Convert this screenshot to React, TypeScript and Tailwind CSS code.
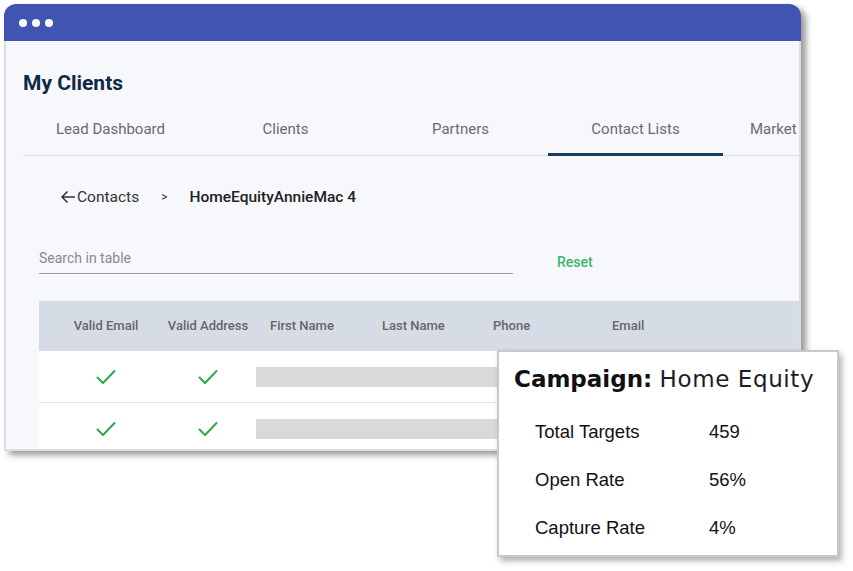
import React from "react";

const tabs = ["Lead Dashboard", "Clients", "Partners", "Contact Lists"];

const stats = [
  { label: "Total Targets", value: "459" },
  { label: "Open Rate", value: "56%" },
  { label: "Capture Rate", value: "4%" },
];

const Check = () => (
  <svg width="20" height="16" viewBox="0 0 20 16" fill="none" aria-hidden="true">
    <path d="M1.5 8.5 L7 14 L18.5 2" stroke="#2ea84a" strokeWidth="2" strokeLinecap="round" strokeLinejoin="round" />
  </svg>
);

const Row = ({ last }: { last?: boolean }) => (
  <div className={`flex h-[52px] items-center bg-white ${last ? "" : "border-b border-[#e3e3e3]"}`}>
    <div className="flex w-[134px] justify-center">
      <Check />
    </div>
    <div className="flex w-[70px] justify-center">
      <Check />
    </div>
    <div className="ml-[13px] h-[20px] w-[320px] bg-[#d9d9d9]" />
  </div>
);

export default function App() {
  return (
    <div className="relative h-[571px] w-[853px] overflow-hidden bg-white font-['Roboto',sans-serif]">
      {/* Browser window */}
      <div className="ml-[4px] mt-[4px] flex h-[447px] w-[797px] flex-col overflow-hidden rounded-t-[12px] shadow-[5px_4px_6px_rgba(0,0,0,0.4)]">
        <div className="flex h-[37px] shrink-0 items-center gap-[5px] bg-[#4054b2] pl-[15px]">
          <span className="h-[8px] w-[8px] rounded-full bg-white" />
          <span className="h-[8px] w-[8px] rounded-full bg-white" />
          <span className="h-[8px] w-[8px] rounded-full bg-white" />
        </div>

        <div className="flex-1 overflow-hidden border-x-2 border-b-2 border-[#dedede] bg-[#f7f8fc] pl-[17px]">
          <h1 className="mt-[29px] text-[21px] font-bold leading-[26px] text-[#0e2b46]">My Clients</h1>

          {/* Tabs */}
          <div className="mt-[15px] flex h-[45px] border-b border-[#dcdcdc] pb-[8px]">
            {tabs.map((t) => (
              <div
                key={t}
                className={`flex w-[175px] shrink-0 items-center justify-center whitespace-nowrap text-[15px] text-[#6b6b6b] ${
                  t === "Contact Lists" ? "-mb-[9px] border-b-[3px] border-[#1b3a5e] pb-[5px]" : ""
                }`}
              >
                {t}
              </div>
            ))}
            <div className="flex shrink-0 items-center whitespace-nowrap pl-[27px] text-[15px] text-[#6b6b6b]">
              Market
            </div>
          </div>

          {/* Breadcrumb */}
          <div className="ml-[37px] mt-[31px] flex items-center text-[15.5px] leading-[20px] text-[#333]">
            <svg width="16" height="14" viewBox="0 0 16 14" fill="none" aria-hidden="true">
              <path d="M15 7 H2 M7.5 1.5 L2 7 L7.5 12.5" stroke="#333" strokeWidth="1.5" />
            </svg>
            <span className="ml-[1px]">Contacts</span>
            <span className="ml-[22px] text-[12px]">&gt;</span>
            <span className="ml-[22px] font-medium text-[#222]">HomeEquityAnnieMac 4</span>
          </div>

          {/* Search */}
          <div className="ml-[16px] mt-[42px] flex items-end">
            <div className="w-[474px] border-b border-[#9a9a9a] pb-[6px] text-[14px] leading-[18px] text-[#8a8a8a]">
              Search in table
            </div>
            <button className="mb-[1px] ml-[44px] text-[14px] font-medium text-[#3bb46a]">Reset</button>
          </div>

          {/* Table */}
          <div className="ml-[16px] mt-[27px]">
            <div className="flex h-[50px] items-center bg-[#d6dce6] text-[13px] font-medium text-[#666]">
              <div className="flex w-[134px] justify-center whitespace-nowrap">Valid Email</div>
              <div className="flex w-[70px] justify-center whitespace-nowrap">Valid Address</div>
              <div className="w-[112px] shrink-0 pl-[27px]">First Name</div>
              <div className="w-[111px] shrink-0 pl-[27px]">Last Name</div>
              <div className="w-[119px] shrink-0 pl-[27px]">Phone</div>
              <div className="w-[120px] shrink-0 pl-[27px]">Email</div>
            </div>
            <Row />
            <Row last />
          </div>
        </div>
      </div>

      {/* Campaign popup */}
      <div className="absolute left-[497px] top-[350px] h-[207px] w-[342px] border-2 border-[#c9c9c9] bg-white shadow-[3px_4px_6px_rgba(0,0,0,0.3)]">
        <div className="ml-[15px] mt-[13px] whitespace-nowrap font-['DejaVu_Sans',sans-serif] text-[23px] leading-[28px] text-[#111]">
          <span className="font-bold">Campaign:</span>{" "}
          <span className="font-normal tracking-[0.6px] text-[#1c1c2a]">Home Equity</span>
        </div>
        <div className="ml-[36px] mt-[28px] flex flex-col gap-[26px] font-['Liberation_Sans',Arial,sans-serif] text-[18.5px] leading-[22px] text-[#111]">
          {stats.map((s) => (
            <div key={s.label} className="flex">
              <span className="w-[174px]">{s.label}</span>
              <span>{s.value}</span>
            </div>
          ))}
        </div>
      </div>
    </div>
  );
}
